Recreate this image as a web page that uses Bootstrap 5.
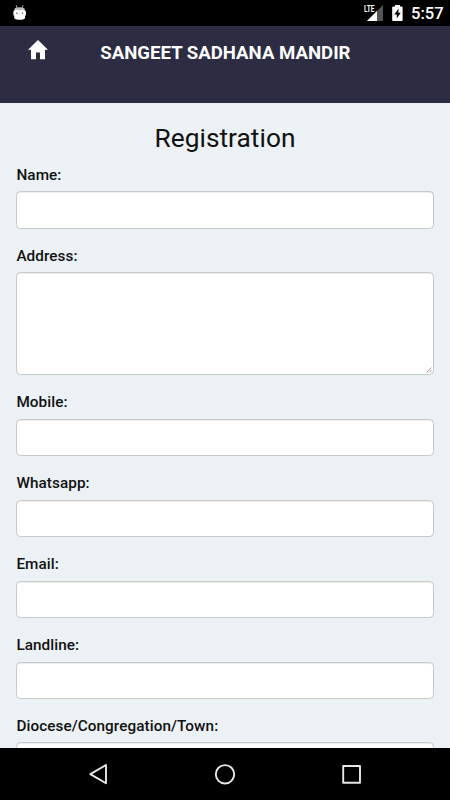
<!DOCTYPE html>
<html lang="en">
<head>
<meta charset="utf-8">
<meta name="viewport" content="width=device-width, initial-scale=1">
<title>Sangeet Sadhana Mandir</title>
<link href="https://cdn.jsdelivr.net/npm/bootstrap@5.3.0/dist/css/bootstrap.min.css" rel="stylesheet">
<style>
  body { font-family: Roboto, "Liberation Sans", sans-serif; background: #ebf1f4; color: #111; font-size: 15.3px; line-height: 21.88px; }
  .status { height: 26.25px; background: #000; padding: 0 8px 0 11px; }
  .clock { font-size: 16.6px; font-weight: 500; line-height: 26px; width: 31px; white-space: nowrap; padding-top: 1px; }
  .appbar { height: 76.4px; background: #2c2d42; border-bottom: 1px solid #292a3c; padding: 0 28px; }
  .home-link { margin-top: 13px; line-height: 0; }
  .brand-title { font-size: 18.6px; font-weight: 700; line-height: 24px; margin: 15px 0 0 52.3px; white-space: nowrap; }
  .page { padding: 21.6px 16.4px 0; min-height: 0; }
  .page h1 { font-size: 26.3px; font-weight: 400; line-height: 28.9px; margin-bottom: 10.9px; letter-spacing: .02px; }
  .field { margin-bottom: 16.4px; }
  .field .form-label { display: block; font-weight: 500; letter-spacing: .07px; padding-top: .7px; margin-bottom: 4.77px; }
  .field .form-control { height: 37.19px; border: 1px solid #c7cacb; border-radius: 4.4px; box-shadow: inset 0 1px 1px rgba(0,0,0,.075); padding: 6px 13px; }
  .field textarea.form-control { height: 102.8px; min-height: 0; resize: none; }
  .grip { position: absolute; right: 2px; bottom: 2px; }
  .sysnav { height: 52.5px; background: #000; }
</style>
<script src="https://cdn.jsdelivr.net/npm/bootstrap@5.3.0/dist/js/bootstrap.bundle.min.js"></script>
</head>
<body class="vh-100 overflow-hidden d-flex flex-column">
  <div class="status d-flex align-items-center flex-shrink-0 text-white">
    <svg width="17" height="18" viewBox="0 0 17 18">
      <path d="M5.2 1.2 6 4M12 1.2 11.2 4" stroke="#aaa" stroke-width="1" fill="none"/>
      <path d="M3.7 4.2Q8.6 2.2 13.5 4.2V7H3.7Z" fill="#bdbdbd"/>
      <path d="M2.4 7.5Q2.4 6.5 3.5 6.5V5.4Q8.6 7 13.7 5.4V6.5Q14.9 6.5 14.9 7.5V11.5H14V14Q13.4 15.8 8.6 15.8T3.2 14V11.5H2.4Z" fill="#fff"/>
      <circle cx="5.9" cy="9.2" r=".75" fill="#555"/><circle cx="11.4" cy="9.2" r=".75" fill="#555"/>
      <path d="M7.4 10.5H9.8" stroke="#ddd" stroke-width=".6"/>
    </svg>
    <svg class="ms-auto" width="20" height="18" viewBox="0 0 20 18">
      <path d="M19 1V17H3Z" fill="#555"/>
      <path d="M13 7V17H3Z" fill="#fff"/>
      <path d="M0 0H11V9H0Z" fill="#000"/>
      <text x="0" y="8" font-size="8.6" font-weight="700" textLength="10.5" lengthAdjust="spacingAndGlyphs" fill="#fff">LTE</text>
    </svg>
    <svg width="11" height="16" viewBox="0 0 11 16" style="margin-left:8px">
      <path d="M3 0H8V1.6H9.6Q10.6 1.6 10.6 2.6V15Q10.6 16 9.6 16H1.2Q.2 16 .2 15V2.6Q.2 1.6 1.2 1.6H3Z" fill="#fff"/>
      <path d="M6.6 3.6 2.3 9.4H4.8V13.6L8.7 7.8H6.3Z" fill="#000"/>
    </svg>
    <span class="clock ms-2">5:57</span>
  </div>

  <header class="appbar d-flex align-items-start flex-shrink-0 text-white">
    <a href="#" class="home-link text-white" aria-label="Home">
      <svg width="20" height="21" viewBox="0 0 20 21"><path d="M10 .9 0 10.8H3V20.2H8V13.5H12V20.2H17V10.8H20Z" fill="currentColor"/></svg>
    </a>
    <div class="brand-title">SANGEET SADHANA MANDIR</div>
  </header>

  <main class="page flex-grow-1 overflow-hidden">
    <h1 class="text-center mt-0">Registration</h1>
    <form>
      <div class="field"><label class="form-label" for="name">Name:</label><input id="name" class="form-control" type="text"></div>
      <div class="field">
        <label class="form-label" for="address">Address:</label>
        <div class="position-relative">
          <textarea id="address" class="form-control d-block"></textarea>
          <svg class="grip" width="6" height="6" viewBox="0 0 6 6" stroke="#aaa" stroke-width=".9"><path d="M.5 5.5 5.5.5M3.2 5.5 5.5 3.2"/></svg>
        </div>
      </div>
      <div class="field"><label class="form-label" for="mobile">Mobile:</label><input id="mobile" class="form-control" type="tel"></div>
      <div class="field"><label class="form-label" for="whatsapp">Whatsapp:</label><input id="whatsapp" class="form-control" type="tel"></div>
      <div class="field"><label class="form-label" for="email">Email:</label><input id="email" class="form-control" type="email"></div>
      <div class="field"><label class="form-label" for="landline">Landline:</label><input id="landline" class="form-control" type="tel"></div>
      <div class="field"><label class="form-label" for="town">Diocese/Congregation/Town:</label><input id="town" class="form-control" type="text"></div>
    </form>
  </main>

  <nav class="sysnav d-flex flex-shrink-0 justify-content-center" aria-label="System">
    <svg width="450" height="52.5" viewBox="0 0 450 52.5" fill="none" stroke="#e8e8e8" stroke-width="1.9" stroke-linejoin="round">
      <path d="M106 17V35.2L90.3 26.1Z"/>
      <circle cx="225" cy="26.3" r="9.2"/>
      <rect x="343.2" y="18" width="16.8" height="16.8"/>
    </svg>
  </nav>
</body>
</html>
